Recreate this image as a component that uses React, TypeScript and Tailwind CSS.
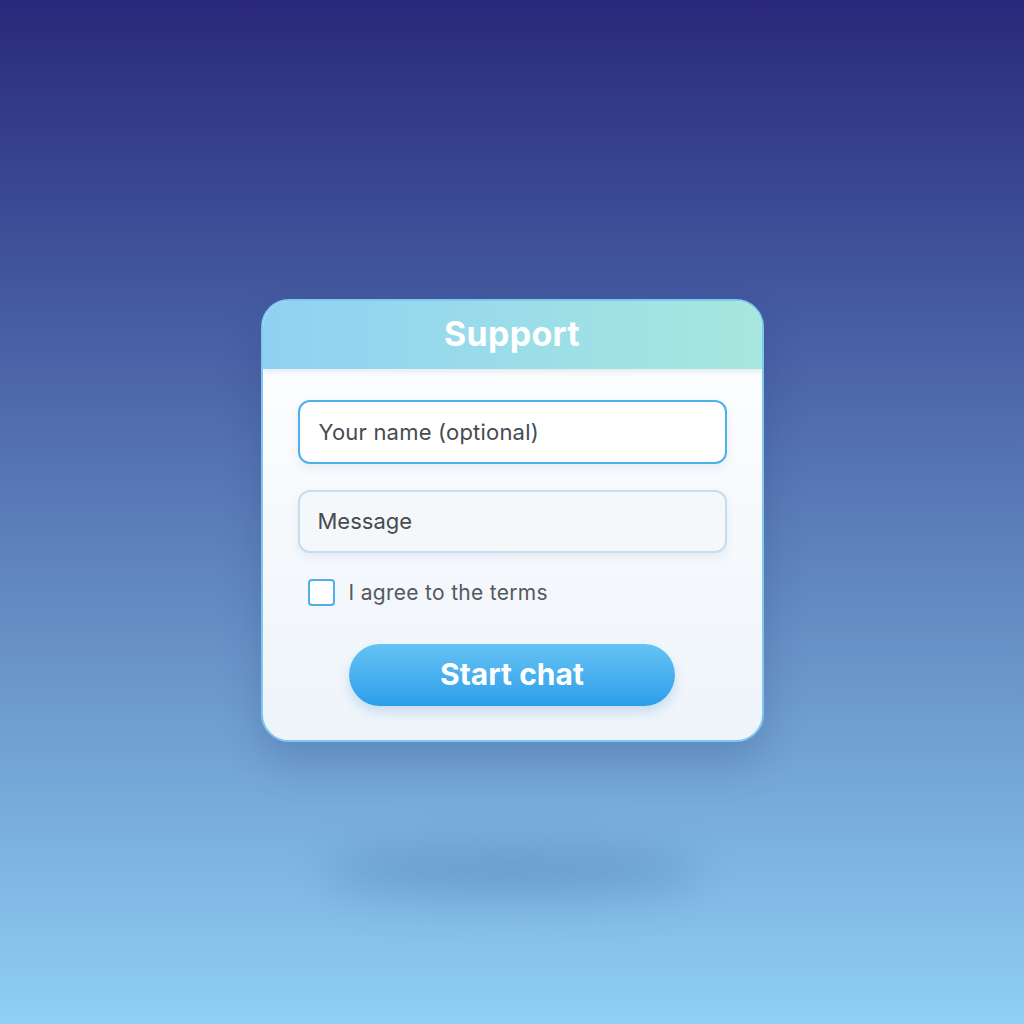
import React from "react";

export default function App() {
  return (
    <div
      className="w-[1024px] h-[1024px] overflow-hidden flex flex-col items-center bg-gradient-to-b from-[#2a287c] via-[#5a7cb8] to-[#8fd0f4]"
      style={{ fontFamily: "Inter, 'Noto Sans', sans-serif" }}
    >
      <div className="mt-[299px] w-[503px] h-[443px] rounded-[28px] border-2 border-[#80c8f0] bg-gradient-to-b from-[#ffffff] to-[#eef4fa] overflow-hidden flex flex-col shadow-[0_20px_40px_rgba(30,50,110,0.22)]">
        <div className="h-[68px] shrink-0 bg-gradient-to-r from-[#90d1f3] to-[#a6e8dd] flex items-center justify-center shadow-[0_3px_6px_rgba(120,150,180,0.18)] relative z-10">
          <span className="text-white font-bold text-[34px] tracking-[0.3px] leading-none pb-[2px]">Support</span>
        </div>
        <div className="flex flex-col px-[35px] pt-[31px]">
          <div className="h-[64px] rounded-[12px] border-2 border-[#4eb0ea] bg-white flex items-center px-[19px] shadow-[0_4px_10px_rgba(100,140,180,0.12)]">
            <span className="text-[22px] tracking-[0.2px] text-[#474b50]">Your name (optional)</span>
          </div>
          <div className="mt-[26px] h-[63px] rounded-[12px] border-2 border-[#c6ddef] bg-[#f4f8fb] flex items-center px-[18px] shadow-[0_4px_10px_rgba(100,140,180,0.12)]">
            <span className="text-[22px] text-[#474b50]">Message</span>
          </div>
          <div className="mt-[24px] flex items-center pl-[10px] gap-[14px]">
            <div className="w-[27px] h-[27px] rounded-[4px] border-2 border-[#4eb0ea] bg-white" />
            <span className="text-[21px] tracking-[0.3px] text-[#55595e]">I agree to the terms</span>
          </div>
          <div className="mt-[35px] flex justify-center">
            <div className="w-[326px] h-[62px] rounded-full bg-gradient-to-b from-[#64c3f5] to-[#2b9ee9] flex items-center justify-center shadow-[0_6px_12px_rgba(40,120,200,0.2)]">
              <span className="text-white font-bold text-[30px] leading-none pb-[2px]">Start chat</span>
            </div>
          </div>
        </div>
      </div>
      <div className="mt-[105px] w-[380px] h-[50px] rounded-[50%] bg-[#4a78a8] opacity-40 blur-[22px]" />
    </div>
  );
}
